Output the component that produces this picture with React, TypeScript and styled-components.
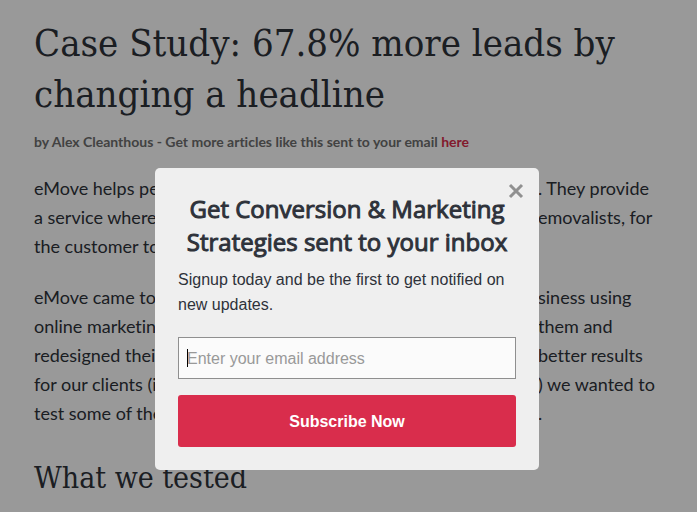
import React from "react";
import styled, { createGlobalStyle } from "styled-components";

const GlobalStyle = createGlobalStyle`
  *, *::before, *::after { box-sizing: border-box; }
  body {
    margin: 0;
    background: #ffffff;
    overflow: hidden;
  }
  h1, h2, p { margin: 0; }
`;

const accent = "#d92d4c";
const ink = "#2e323a";
const sans = '"Liberation Sans", Arial, sans-serif';
const serif = '"DejaVu Serif Condensed", "DejaVu Serif", serif';
const bodySans = 'Lato, "Open Sans", sans-serif';

const Article = styled.article`
  padding: 18px 34px 0;
  color: ${ink};
  font-family: ${bodySans};
  font-variant-ligatures: none;
`;

const Title = styled.h1`
  font: 400 38px/51px ${serif};
`;

const Byline = styled.p`
  margin-top: 12px;
  color: #6e6e6e;
  font-size: 14px;
  font-weight: 700;
  line-height: 20px;
`;

const BylineLink = styled.a`
  color: ${accent};
  text-decoration: none;
`;

const Paragraph = styled.p`
  margin-top: 22px;
  font-size: 18px;
  line-height: 29px;
`;

const Line = styled.span`
  display: grid;
  grid-template-columns: 504px 1fr;
  white-space: nowrap;
`;

const Subheading = styled.h2`
  margin-top: 28px;
  font: 400 30px/44px ${serif};
`;

const Overlay = styled.div`
  position: fixed;
  inset: 0;
  display: flex;
  justify-content: center;
  align-items: flex-start;
  padding: 168px 3px 0 0;
  background: rgba(0, 0, 0, 0.4);
`;

const Dialog = styled.section`
  position: relative;
  width: 384px;
  max-width: 100%;
  padding: 24px 23px 23px;
  border-radius: 5px;
  background: #efefef;
  color: ${ink};
  font-family: ${sans};
`;

const CloseButton = styled.button`
  position: absolute;
  top: 12px;
  right: 12px;
  display: flex;
  padding: 3px;
  border: 0;
  background: none;
  color: #909090;
  cursor: pointer;
`;

const DialogTitle = styled.h2`
  font: 400 24px/33px "Open Sans", sans-serif;
  -webkit-text-stroke: 1px ${ink};
  text-align: center;
`;

const DialogText = styled.p`
  margin-top: 9px;
  font-size: 16px;
  line-height: 25px;
`;

const Form = styled.form`
  display: flex;
  flex-direction: column;
  gap: 16px;
  margin-top: 20px;
`;

const Field = styled.label`
  position: relative;
  display: block;
`;

const Caret = styled.span`
  position: absolute;
  top: 12px;
  left: 9px;
  width: 1px;
  height: 18px;
  background: #000000;
`;

const EmailInput = styled.input`
  display: block;
  width: 100%;
  height: 42px;
  padding: 2px 8px 0;
  border: 1px solid #8f8f8f;
  border-radius: 0;
  outline: none;
  background: #fbfbfb;
  color: ${ink};
  font: 16px ${sans};

  &::placeholder {
    color: #999999;
    opacity: 1;
  }
`;

const SubmitButton = styled.button`
  height: 52px;
  padding: 2px 8px 0;
  border: 0;
  border-radius: 3px;
  background: ${accent};
  color: #ffffff;
  font: 700 16px ${sans};
  cursor: pointer;
`;

const paragraphs = [
  [
    ["eMove helps pe", ". They provide"],
    ["a service where", "emovalists, for"],
    ["the customer to", ""],
  ],
  [
    ["eMove came to", "siness using"],
    ["online marketin", "them and"],
    ["redesigned thei", "better results"],
    ["for our clients (i", ") we wanted to"],
    ["test some of the", "."],
  ],
];

export default function App() {
  return (
    <>
      <GlobalStyle />
      <Article>
        <Title>Case Study: 67.8% more leads by changing a headline</Title>
        <Byline>
          by Alex Cleanthous - Get more articles like this sent to your email{" "}
          <BylineLink href="#subscribe">here</BylineLink>
        </Byline>
        {paragraphs.map((lines, index) => (
          <Paragraph key={index}>
            {lines.map(([start, end]) => (
              <Line key={start}>
                <span>{start}</span>
                <span>{end}</span>
              </Line>
            ))}
          </Paragraph>
        ))}
        <Subheading>What we tested</Subheading>
      </Article>
      <Overlay>
        <Dialog id="subscribe" role="dialog" aria-labelledby="dialog-title">
          <CloseButton type="button" aria-label="Close">
            <svg width="16" height="16" viewBox="0 0 16 16" fill="none" stroke="currentColor" strokeWidth="3">
              <path d="M2 2 14 14M14 2 2 14" />
            </svg>
          </CloseButton>
          <DialogTitle id="dialog-title">Get Conversion &amp; Marketing Strategies sent to your inbox</DialogTitle>
          <DialogText>Signup today and be the first to get notified on new updates.</DialogText>
          <Form onSubmit={(event) => event.preventDefault()}>
            <Field>
              <EmailInput type="email" aria-label="Email address" placeholder="Enter your email address" />
              <Caret />
            </Field>
            <SubmitButton type="submit">Subscribe Now</SubmitButton>
          </Form>
        </Dialog>
      </Overlay>
    </>
  );
}
